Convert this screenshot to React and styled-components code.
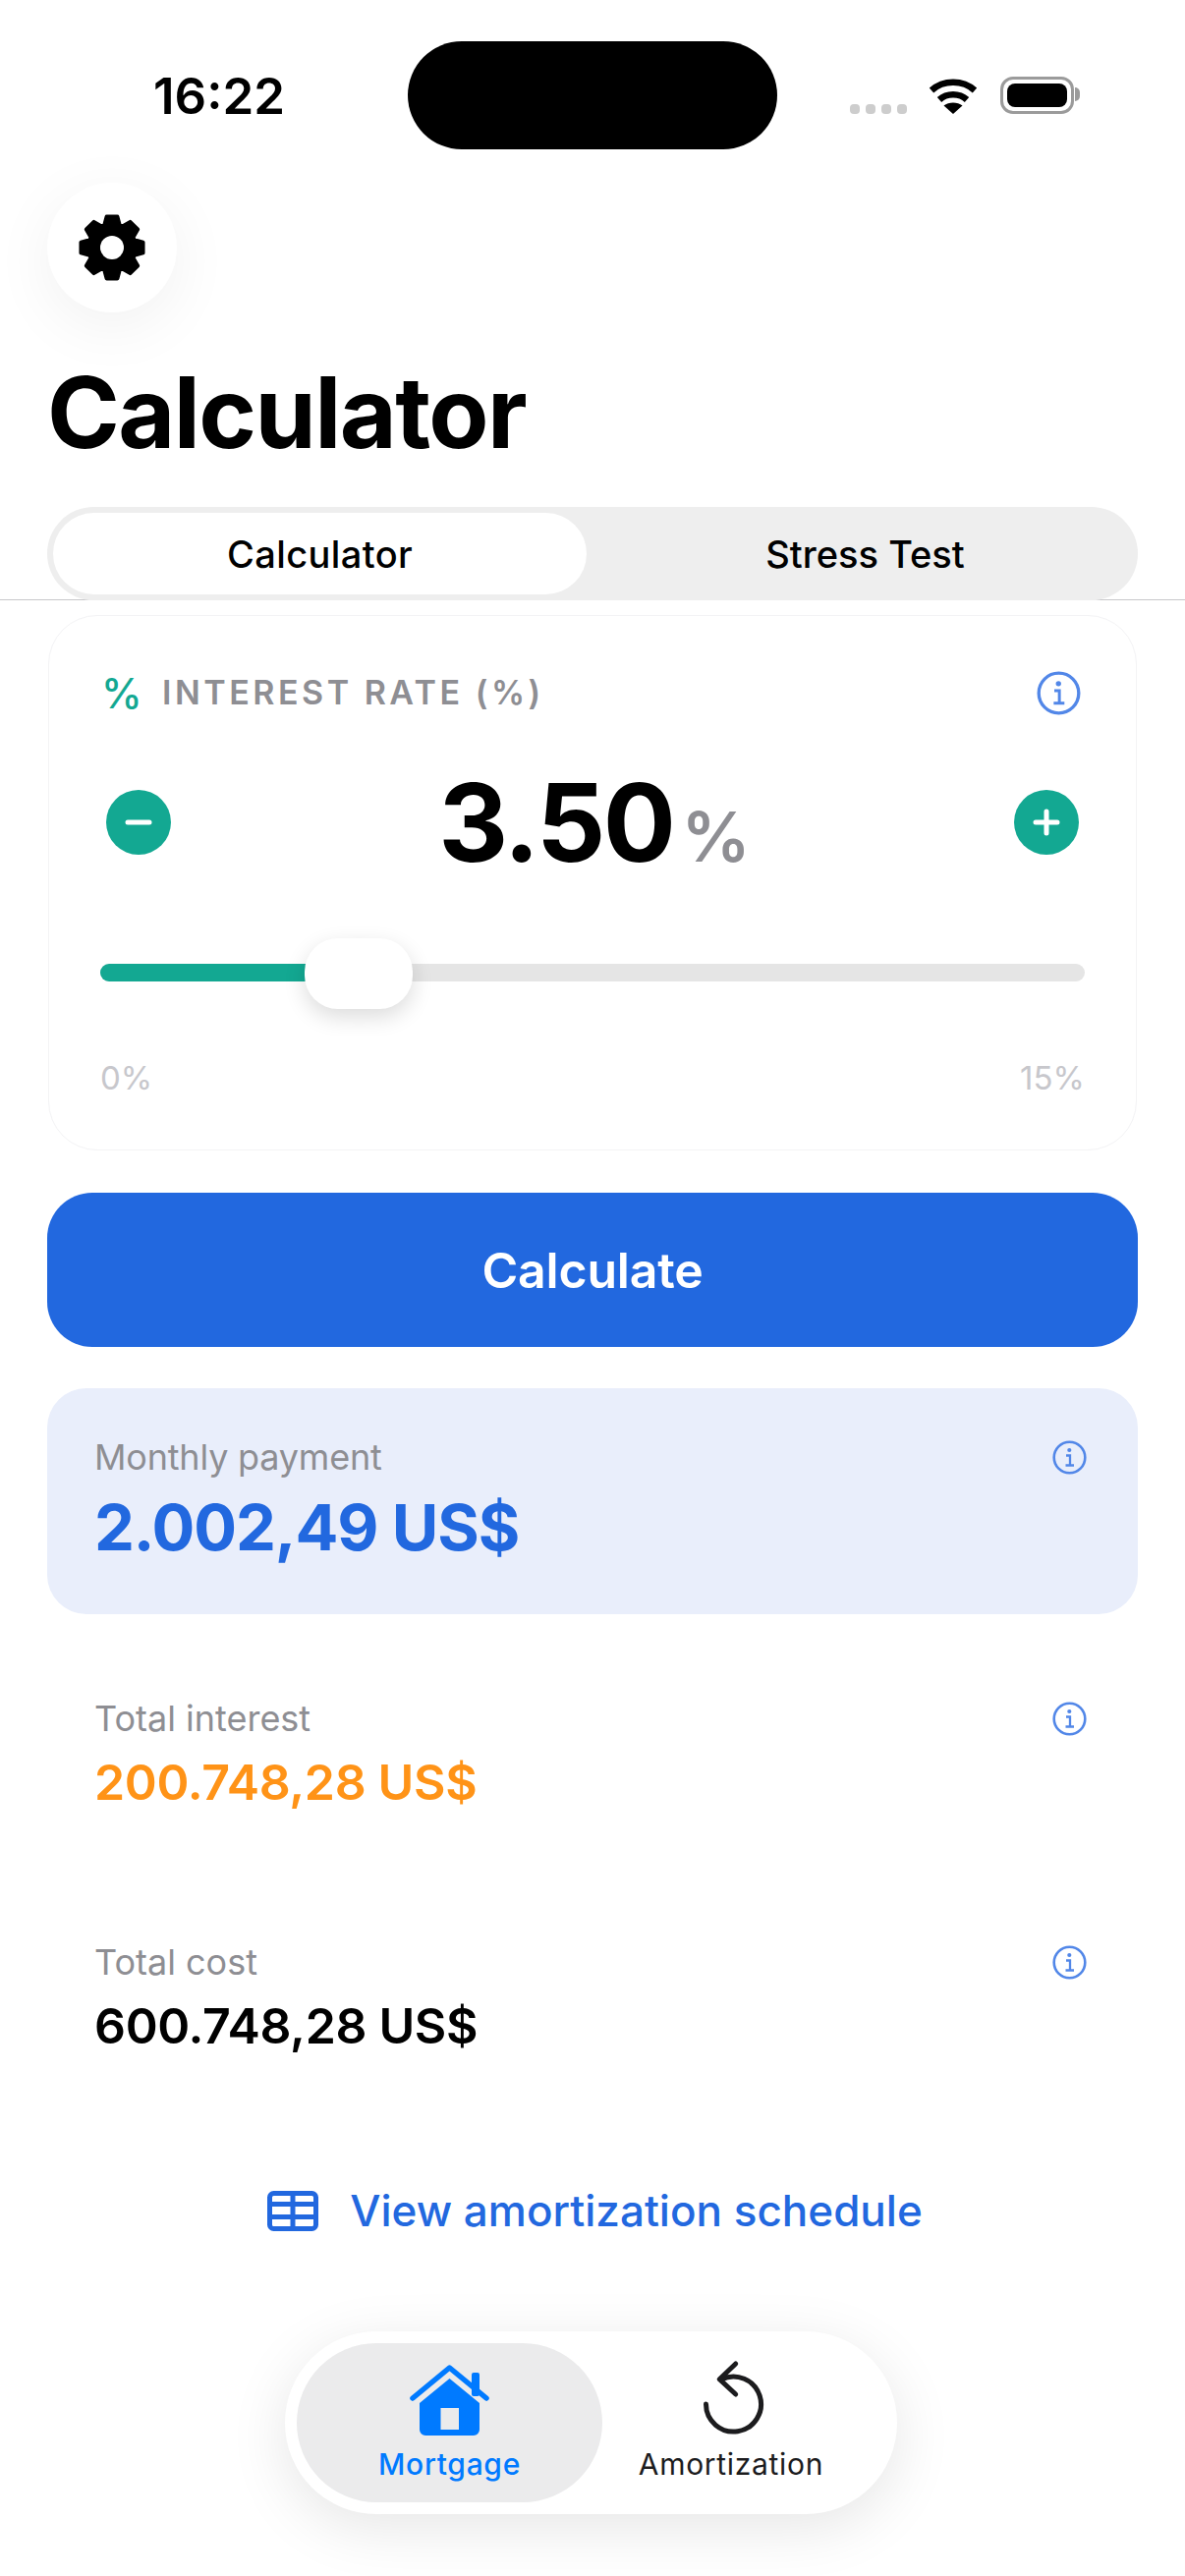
import React from 'react';
import styled, { createGlobalStyle } from 'styled-components';

const GlobalStyle = createGlobalStyle`
	html, body {
		margin: 0;
		padding: 0;
		background: #fff;
	}
	body {
		font-family: Inter, "Noto Sans", "Liberation Sans", sans-serif;
		color: #000;
	}
	* {
		box-sizing: border-box;
	}
`;

const BLUE = '#2268df';
const TEAL = '#13a892';

const Screen = styled.div`
	width: 1206px;
	height: 2622px;
	overflow: hidden;
	background: #fff;
`;

const Header = styled.header`
	height: 611px;
	padding: 42px 48px 0;
	border-bottom: 1px solid #c8c8ca;
`;

const StatusBar = styled.div`
	display: flex;
	height: 110px;
	margin: 0 -48px;
`;

const Time = styled.div`
	width: 415px;
	padding-left: 156px;
	font-size: 51px;
	line-height: 112px;
	font-weight: 600;
`;

const Island = styled.div`
	width: 376px;
	height: 110px;
	border-radius: 55px;
	background: #000;
`;

const StatusIcons = styled.div`
	display: flex;
	align-items: flex-end;
	height: 74px;
	padding-left: 74px;
`;

const Dots = styled.div`
	display: flex;
	gap: 6px;
	margin-right: 22px;
`;

const Dot = styled.span`
	width: 10px;
	height: 10px;
	border-radius: 4px;
	background: #cdcdcd;
`;

const Battery = styled.div`
	position: relative;
	width: 75px;
	height: 38px;
	margin-left: 23px;
	padding: 4px;
	border: 3px solid #9b9b9b;
	border-radius: 13px;

	&::before {
		content: '';
		display: block;
		height: 100%;
		border-radius: 8px;
		background: #000;
	}

	&::after {
		content: '';
		position: absolute;
		top: 8px;
		right: -9px;
		width: 5px;
		height: 14px;
		border-radius: 0 6px 6px 0;
		background: #9b9b9b;
	}
`;

const SettingsButton = styled.button`
	display: flex;
	align-items: center;
	justify-content: center;
	width: 132px;
	height: 132px;
	margin-top: 34px;
	padding: 0;
	border: 0;
	border-radius: 50%;
	background: #fff;
	box-shadow: 0 14px 64px rgba(0, 0, 0, 0.06);
`;

const Title = styled.h1`
	margin: 42px 0 0 0;
	font-size: 100px;
	line-height: 120px;
	font-weight: 700;
	letter-spacing: -1.6px;
`;

const Segments = styled.div`
	display: flex;
	height: 95px;
	margin-top: 36px;
	padding: 6px;
	border-radius: 48px;
	background: #eeeeee;
`;

const Segment = styled.div`
	display: flex;
	align-items: center;
	justify-content: center;
	width: ${({ $active }) => ($active ? '543px' : '555px')};
	padding-left: ${({ $active }) => ($active ? '0' : '12px')};
	border-radius: 42px;
	font-size: 38px;
	font-weight: 500;
	letter-spacing: ${({ $active }) => ($active ? '0.4px' : '0')};
	background: ${({ $active }) => ($active ? '#fff' : 'transparent')};
`;

const Content = styled.main`
	padding: 15px 48px 0;
`;

const RateCard = styled.section`
	height: 545px;
	margin: 0 1px;
	padding: 55px 52px 0;
	border: 1px solid #f3f3f5;
	border-radius: 50px;
	background: #fff;
`;

const LabelRow = styled.div`
	display: flex;
	align-items: center;
	height: 46px;
	padding: 0 4px 0 1px;
`;

const PercentMark = styled.span`
	width: 62px;
	font-size: 42px;
	font-weight: 500;
	color: ${TEAL};
`;

const RateLabel = styled.span`
	flex: 1;
	padding-bottom: 2px;
	font-size: 34px;
	font-weight: 600;
	letter-spacing: 3.5px;
	color: #8e8e93;
`;

const Stepper = styled.div`
	display: flex;
	align-items: center;
	justify-content: space-between;
	height: 110px;
	margin-top: 54px;
	padding: 0 6px;
`;

const StepButton = styled.button`
	display: flex;
	align-items: center;
	justify-content: center;
	width: 66px;
	height: 66px;
	padding: 0;
	border: 0;
	border-radius: 50%;
	background: ${TEAL};
`;

const RateValue = styled.div`
	display: flex;
	align-items: baseline;
	gap: 8px;
	padding: 15px 0 0 4px;
	font-size: 110px;
	font-weight: 700;
	line-height: 110px;
	letter-spacing: -2.5px;
`;

const RateUnit = styled.span`
	font-size: 70px;
	font-weight: 600;
	letter-spacing: 0;
	color: #8e8e93;
`;

const Slider = styled.div`
	position: relative;
	display: flex;
	align-items: center;
	height: 72px;
	margin-top: 63px;
`;

const Track = styled.div`
	width: 100%;
	height: 18px;
	margin-bottom: 3px;
	border-radius: 9px;
	background: #e5e5e5;
	overflow: hidden;
`;

const TrackFill = styled.div`
	height: 100%;
	background: ${TEAL};
`;

const Thumb = styled.div`
	position: absolute;
	top: 0;
	width: 110px;
	height: 72px;
	border-radius: 34px;
	background: #fff;
	box-shadow: 0 8px 22px rgba(0, 0, 0, 0.14);
`;

const RangeLabels = styled.div`
	display: flex;
	justify-content: space-between;
	margin-top: 51px;
	font-size: 33px;
	line-height: 38px;
	color: #c7c7cc;
`;

const CalculateButton = styled.button`
	display: block;
	width: 100%;
	height: 157px;
	margin-top: 43px;
	border: 0;
	border-radius: 46px;
	background: ${BLUE};
	color: #fff;
	font-family: inherit;
	font-size: 50px;
	font-weight: 600;
	letter-spacing: -0.2px;
`;

const ResultRow = styled.div`
	display: flex;
	align-items: flex-start;
	justify-content: space-between;
	padding: ${({ $highlight }) => ($highlight ? '44px 52px 0 48px' : '0 52px 0 48px')};
	height: ${({ $highlight }) => ($highlight ? '230px' : '248px')};
	margin-top: ${({ $highlight, $gap }) => ($highlight ? '42px' : $gap || '0')};
	border-radius: 40px;
	background: ${({ $highlight }) => ($highlight ? '#e9eefb' : 'transparent')};
`;

const ResultLabel = styled.div`
	font-size: 36px;
	line-height: 52px;
	color: #8e8e93;
	letter-spacing: ${({ $tight }) => ($tight ? '-0.2px' : '0')};
`;

const ResultValue = styled.div`
	margin-top: ${({ $large }) => ($large ? '6px' : '7px')};
	font-size: ${({ $large }) => ($large ? '65px' : '50px')};
	line-height: ${({ $large }) => ($large ? '80px' : '64px')};
	font-weight: ${({ $large }) => ($large ? '700' : '600')};
	letter-spacing: ${({ $large }) => ($large ? '-1.1px' : '-0.35px')};
	color: ${({ $color }) => $color};
`;

const InfoSlot = styled.span`
	display: flex;
	height: 52px;
	align-items: center;
`;

const ScheduleLink = styled.a`
	display: flex;
	align-items: center;
	justify-content: center;
	gap: 32px;
	height: 56px;
	margin-top: 3px;
	padding-left: 5px;
	font-size: 44px;
	font-weight: 500;
	color: ${BLUE};
`;

const TabBarWrap = styled.div`
	display: flex;
	justify-content: center;
	margin-top: 95px;
	padding-right: 3px;
`;

const TabBar = styled.nav`
	display: flex;
	width: 623px;
	height: 186px;
	padding: 12px;
	border-radius: 93px;
	background: #fff;
	box-shadow: 0 14px 60px rgba(0, 0, 0, 0.1);
`;

const Tab = styled.div`
	width: ${({ $active }) => ($active ? '311px' : '262px')};
	display: flex;
	flex-direction: column;
	align-items: center;
	justify-content: flex-end;
	padding-bottom: 20px;
	border-radius: 81px;
	background: ${({ $active }) => ($active ? '#ebebec' : 'transparent')};
	color: ${({ $active }) => ($active ? '#007aff' : '#1c1c1e')};
`;

const TabLabel = styled.span`
	margin-top: 10px;
	font-size: 30px;
	line-height: 38px;
	font-weight: ${({ $active }) => ($active ? '500' : '400')};
	letter-spacing: 0.7px;
`;

const gearPath = () => {
	const points = [];
	for (let i = 0; i < 8; i++) {
		const a = (i * Math.PI) / 4 - Math.PI / 2;
		const at = (r, off) => {
			const x = 34 + r * Math.cos(a + off);
			const y = 34 + r * Math.sin(a + off);
			return `${x.toFixed(2)} ${y.toFixed(2)}`;
		};
		points.push(at(24, -0.33), at(32, -0.17), at(32, 0.17), at(24, 0.33));
	}
	return `M${points.join('L')}Z`;
};

const GearIcon = () => (
	<svg width="68" height="68" viewBox="0 0 68 68">
		<path d={gearPath()} fill="#000" stroke="#000" strokeWidth="4" strokeLinejoin="round" />
		<circle cx="34" cy="34" r="12" fill="#fff" />
	</svg>
);

const WifiIcon = () => (
	<svg width="50" height="37" viewBox="0 0 50 37" fill="none" stroke="#000">
		<path d="M3 13C15 2 35 2 47 13" strokeWidth="6.5" />
		<path d="M11 22.5C18.5 15.5 31.5 15.5 39 22.5" strokeWidth="6.5" />
		<path d="M25 37L15.5 28.5C20.5 24.5 29.5 24.5 34.5 28.5Z" fill="#000" stroke="none" />
	</svg>
);

const InfoIcon = ({ size = 35 }) => (
	<svg width={size} height={size} viewBox="0 0 35 35" fill="none" stroke="#5287e8">
		<circle cx="17.5" cy="17.5" r="15.8" strokeWidth="2.6" />
		<circle cx="17.3" cy="10" r="2.1" fill="#5287e8" stroke="none" />
		<path d="M14 15.5H18V25M13.5 25.5H22" strokeWidth="2.3" />
	</svg>
);

const MinusIcon = () => (
	<svg width="32" height="32" viewBox="0 0 32 32">
		<path d="M5 16H27" stroke="#fff" strokeWidth="5" strokeLinecap="round" />
	</svg>
);

const PlusIcon = () => (
	<svg width="32" height="32" viewBox="0 0 32 32">
		<path d="M5 16H27M16 5V27" stroke="#fff" strokeWidth="5" strokeLinecap="round" />
	</svg>
);

const TableIcon = () => (
	<svg width="52" height="41" viewBox="0 0 52 41" fill="none" stroke={BLUE} strokeWidth="5">
		<rect x="2.5" y="2.5" width="47" height="36" rx="4" />
		<path d="M2 13.5H50M2 26.5H50M26 3V38" />
	</svg>
);

const HomeIcon = () => (
	<svg width="81" height="72" viewBox="0 0 81 72" fill="none">
		<path d="M3 39L40.5 8L78 39" stroke="#ebebec" strokeWidth="7" />
		<rect x="63" y="8" width="8" height="24" rx="2" fill="#007aff" />
		<path d="M3 34L40.5 3L78 34" stroke="#007aff" strokeWidth="5.5" strokeLinecap="round" strokeLinejoin="round" />
		<path
			fillRule="evenodd"
			d="M40.5 14L71 39V66a6 6 0 0 1-6 6H16a6 6 0 0 1-6-6V39ZM31.5 44V66H50V44Z"
			fill="#007aff"
		/>
	</svg>
);

const AmortizationIcon = () => (
	<svg width="70" height="80" viewBox="-3 -3 70 80" fill="none" stroke="#1c1c1e" strokeWidth="5" strokeLinecap="round" strokeLinejoin="round">
		<path d="M6.5 45A28 28 0 1 0 22 20" />
		<path d="M36.7 4L20.2 19.7L36.7 35" />
	</svg>
);

const RATE = 3.5;
const MAX_RATE = 15;
const SLIDER_WIDTH = 1002;
const THUMB_WIDTH = 110;

export default function App() {
	const thumbLeft = ((SLIDER_WIDTH - THUMB_WIDTH) * RATE) / MAX_RATE;

	return (
		<Screen>
			<GlobalStyle />
			<Header>
				<StatusBar>
					<Time>16:22</Time>
					<Island />
					<StatusIcons>
						<Dots>
							<Dot />
							<Dot />
							<Dot />
							<Dot />
						</Dots>
						<WifiIcon />
						<Battery />
					</StatusIcons>
				</StatusBar>
				<SettingsButton>
					<GearIcon />
				</SettingsButton>
				<Title>Calculator</Title>
				<Segments>
					<Segment $active>Calculator</Segment>
					<Segment>Stress Test</Segment>
				</Segments>
			</Header>
			<Content>
				<RateCard>
					<LabelRow>
						<PercentMark>%</PercentMark>
						<RateLabel>INTEREST RATE (%)</RateLabel>
						<InfoIcon size={45} />
					</LabelRow>
					<Stepper>
						<StepButton>
							<MinusIcon />
						</StepButton>
						<RateValue>
							3.50
							<RateUnit>%</RateUnit>
						</RateValue>
						<StepButton>
							<PlusIcon />
						</StepButton>
					</Stepper>
					<Slider>
						<Track>
							<TrackFill style={{ width: thumbLeft + 20 }} />
						</Track>
						<Thumb style={{ left: thumbLeft }} />
					</Slider>
					<RangeLabels>
						<span>0%</span>
						<span>15%</span>
					</RangeLabels>
				</RateCard>
				<CalculateButton>Calculate</CalculateButton>
				<ResultRow $highlight>
					<div>
						<ResultLabel $tight>Monthly payment</ResultLabel>
						<ResultValue $large $color={BLUE}>2.002,49 US$</ResultValue>
					</div>
					<InfoSlot>
						<InfoIcon />
					</InfoSlot>
				</ResultRow>
				<ResultRow $gap="80px">
					<div>
						<ResultLabel>Total interest</ResultLabel>
						<ResultValue $color="#ff9317">200.748,28 US$</ResultValue>
					</div>
					<InfoSlot>
						<InfoIcon />
					</InfoSlot>
				</ResultRow>
				<ResultRow>
					<div>
						<ResultLabel>Total cost</ResultLabel>
						<ResultValue $color="#000">600.748,28 US$</ResultValue>
					</div>
					<InfoSlot>
						<InfoIcon />
					</InfoSlot>
				</ResultRow>
				<ScheduleLink>
					<TableIcon />
					View amortization schedule
				</ScheduleLink>
				<TabBarWrap>
					<TabBar>
						<Tab $active>
							<HomeIcon />
							<TabLabel $active>Mortgage</TabLabel>
						</Tab>
						<Tab>
							<AmortizationIcon />
							<TabLabel>Amortization</TabLabel>
						</Tab>
					</TabBar>
				</TabBarWrap>
			</Content>
		</Screen>
	);
}
